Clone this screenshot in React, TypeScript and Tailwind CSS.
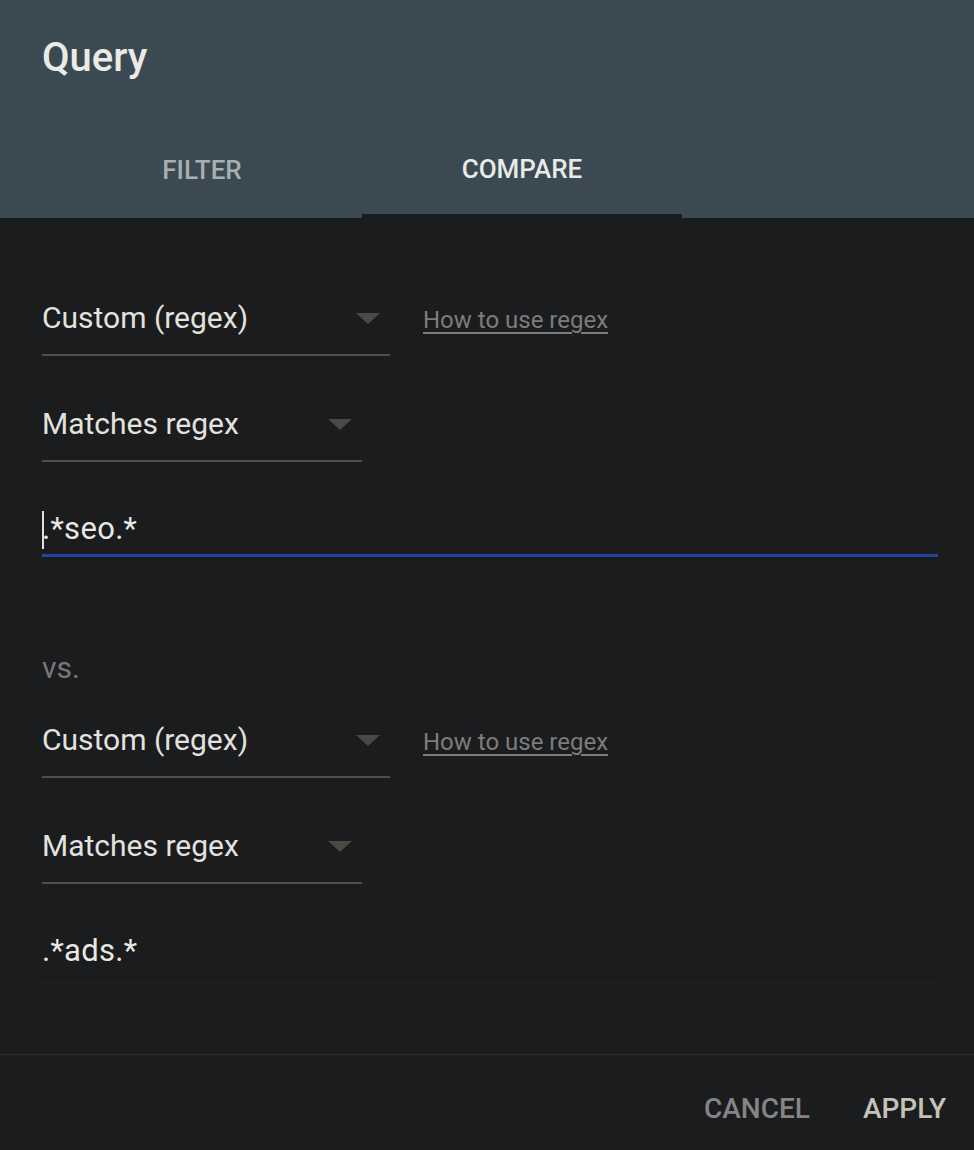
import React from "react";

const font = { fontFamily: "Roboto, 'Noto Sans', 'Liberation Sans', sans-serif" };

function Arrow() {
  return (
    <svg width="24" height="11" viewBox="0 0 24 11" className="shrink-0">
      <path d="M0 0 L24 0 L12 11 Z" fill="#4a4a44" />
    </svg>
  );
}

function Select({ label, width, arrowGap }: { label: string; width: string; arrowGap: string }) {
  return (
    <div className={`${width} pt-0 pb-[18px] border-b-2 border-[#4f4f4f] flex items-center justify-between`}>
      <span className="text-[30px] leading-[36px] text-[#e2e2df]">{label}</span>
      <span className={arrowGap}>
        <Arrow />
      </span>
    </div>
  );
}

function Group({ value, focused }: { value: string; focused: boolean }) {
  return (
    <div className="flex flex-col">
      <div className="flex items-start">
        <Select label="Custom (regex)" width="w-[348px]" arrowGap="pr-[10px]" />
        <a className="ml-[33px] mt-[4px] text-[24px] leading-[32px] text-[#7c7c7c] underline underline-offset-[4px] decoration-[2px]">
          How to use regex
        </a>
      </div>
      <div className="mt-[50px]">
        <Select label="Matches regex" width="w-[320px]" arrowGap="pr-[10px]" />
      </div>
      <div
        className={`mt-[49px] w-[896px] ${
          focused ? "pb-[7px] border-b-[3px] border-[#2443a0]" : "pb-[8px] border-b border-[#141517]"
        }`}
      >
        <div className="relative text-[31px] tracking-[0.3px] leading-[36px] text-[#e8e8e4]">
          {focused && <span className="absolute left-0 top-0 w-[2px] h-[38px] bg-[#e0e0e0]" />}
          {value}
        </div>
      </div>
    </div>
  );
}

export default function App() {
  return (
    <div className="w-[974px] h-[1150px] bg-[#1b1c1e] flex flex-col" style={font}>
      <div className="bg-[#3b4a52] h-[218px] flex flex-col pl-[42px]">
        <div className="pt-[34px] text-[40px] leading-[48px] font-medium text-[#eaeae6]">Query</div>
        <div className="mt-[40px] flex h-[96px]">
          <div className="w-[320px] flex items-center justify-center text-[26px] font-medium text-[#a9aeb0]">
            FILTER
          </div>
          <div className="w-[320px] flex flex-col">
            <div className="flex-1 flex items-center justify-center pt-[2px] text-[26px] font-medium text-[#eaeae6]">
              COMPARE
            </div>
            <div className="h-[4px] bg-[#1b1c1e]" />
          </div>
        </div>
      </div>

      <div className="pl-[42px] pt-[82px] flex flex-col">
        <Group value=".*seo.*" focused={true} />
        <div className="mt-[95px] text-[30px] leading-[32px] text-[#787878]">vs.</div>
        <div className="mt-[38px]">
          <Group value=".*ads.*" focused={false} />
        </div>
      </div>

      <div className="mt-[76px] border-t border-[#2c2d2f] flex-1 flex items-center justify-end pr-[28px] gap-[53px]">
        <button className="text-[28px] font-medium text-[#858585] pt-[12px]">CANCEL</button>
        <button className="text-[28px] font-medium text-[#c6c2ba] pt-[12px]">APPLY</button>
      </div>
    </div>
  );
}
